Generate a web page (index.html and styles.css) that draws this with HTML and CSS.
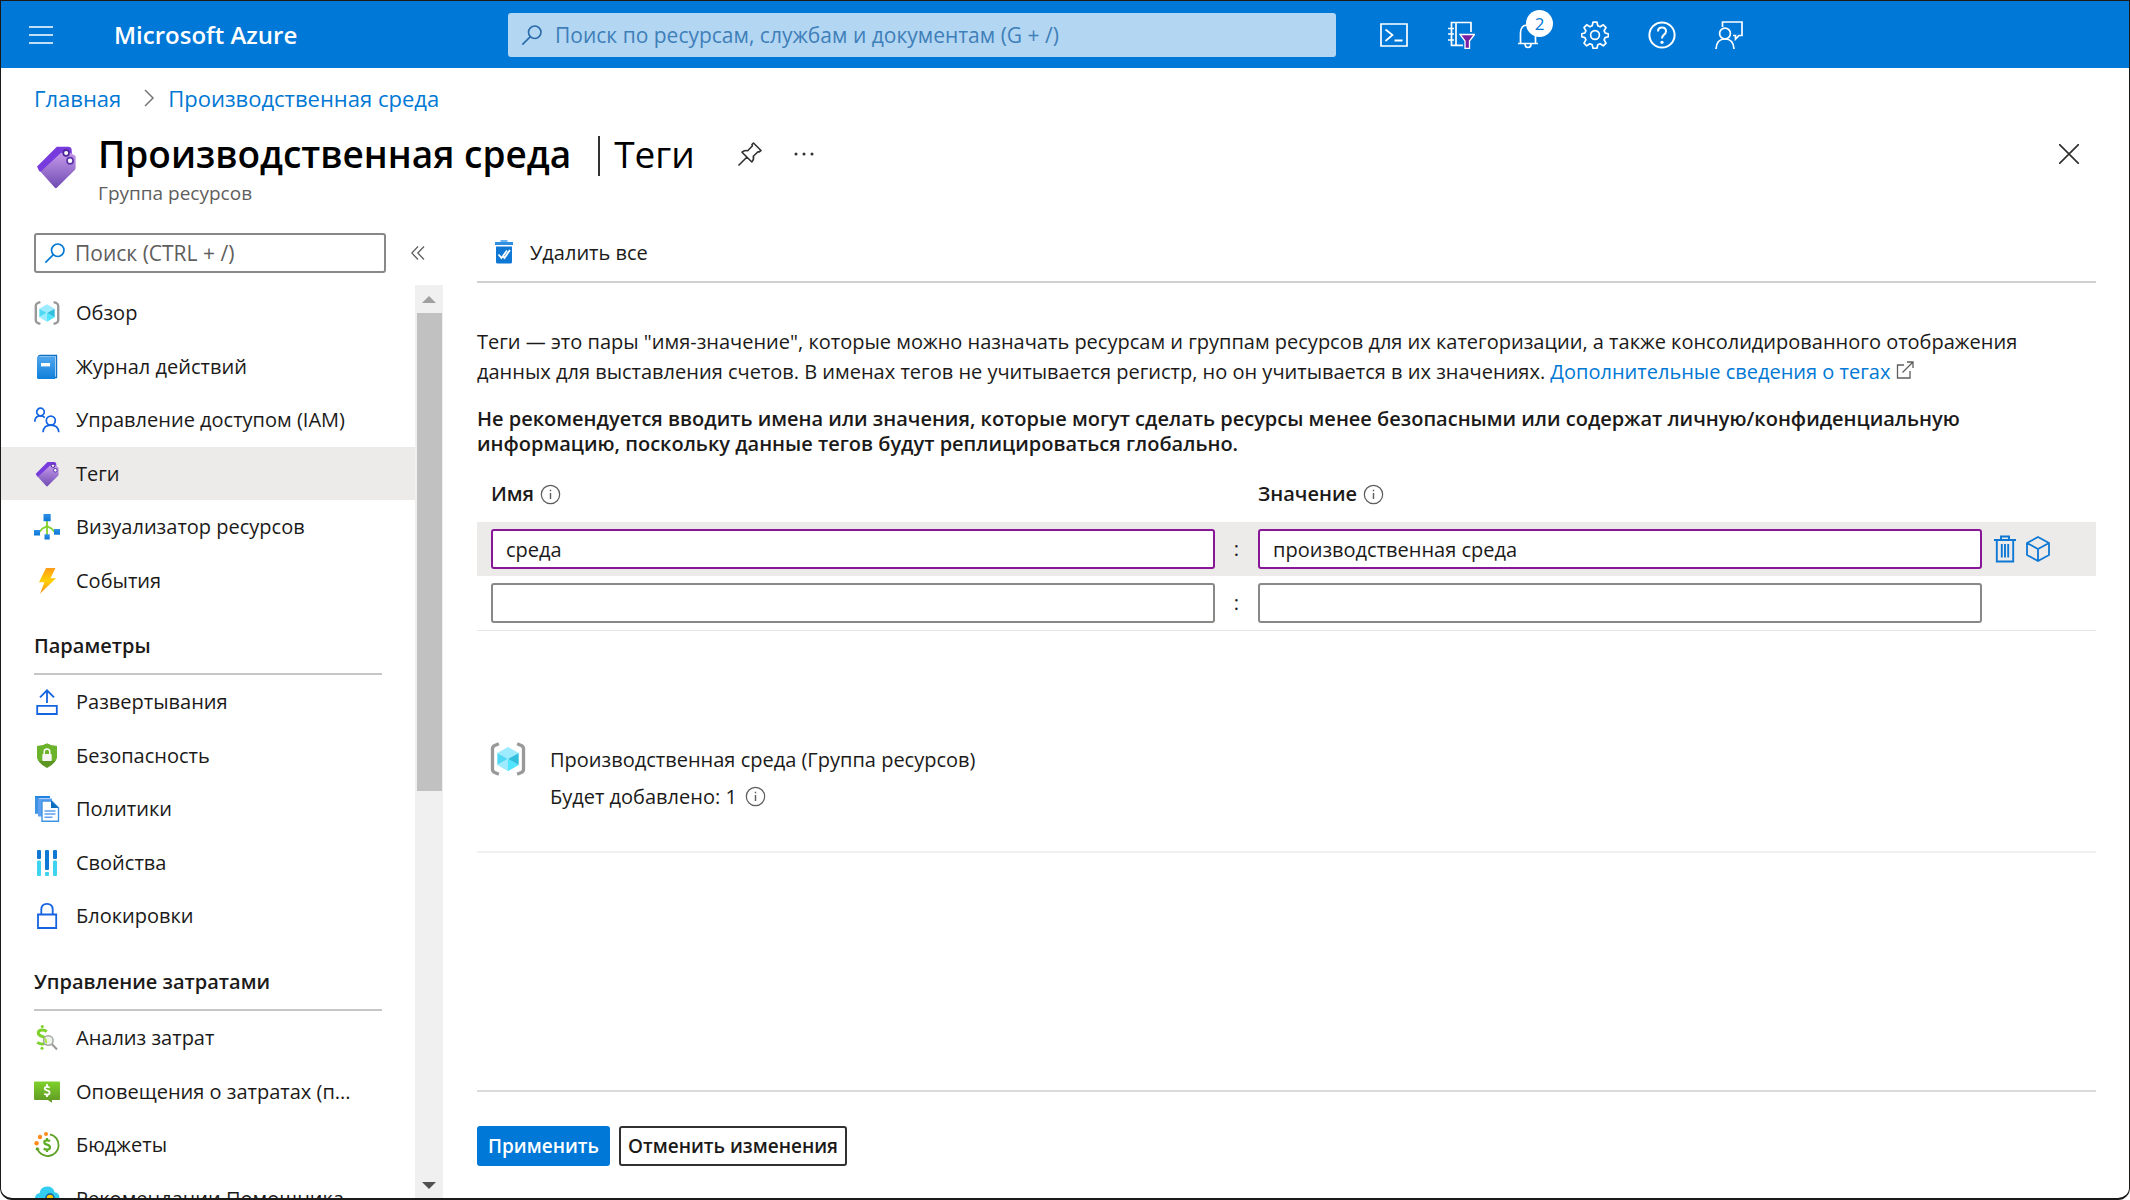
FILE: index.html
```html
<!DOCTYPE html>
<html lang="ru">
<head>
<meta charset="utf-8">
<title>Производственная среда | Теги - Microsoft Azure</title>
<link rel="stylesheet" href="styles.css">
</head>
<body>
<svg class="defs" aria-hidden="true">
  <defs>
    <linearGradient id="gTag" x1="0" y1="0" x2="0" y2="1"><stop offset="0" stop-color="#c69aeb"/><stop offset="1" stop-color="#6f4bb2"/></linearGradient>
    <linearGradient id="gBlue" x1="0" y1="0" x2="0" y2="1"><stop offset="0" stop-color="#2f8fe6"/><stop offset="1" stop-color="#0b78d4"/></linearGradient>
    <linearGradient id="gBook" x1="0" y1="0" x2="0" y2="1"><stop offset="0" stop-color="#4fa6ee"/><stop offset="1" stop-color="#0f7fd9"/></linearGradient>
    <linearGradient id="gBolt" x1="0" y1="0" x2="0" y2="1"><stop offset="0" stop-color="#ff9b1a"/><stop offset=".5" stop-color="#ffd000"/><stop offset="1" stop-color="#f78d1e"/></linearGradient>
    <linearGradient id="gGreen" x1="0" y1="0" x2="0" y2="1"><stop offset="0" stop-color="#7fd12b"/><stop offset="1" stop-color="#5e9624"/></linearGradient>
    <symbol id="i-search" viewBox="0 0 24 24"><g fill="none" stroke="currentColor" stroke-width="1.8"><circle cx="15" cy="9" r="6.8"/><path d="M10.2 13.8 1.5 22.5"/></g></symbol>
    <symbol id="i-info" viewBox="0 0 22 22"><circle cx="11" cy="11" r="9.6" fill="none" stroke="currentColor" stroke-width="1.3"/><path d="M11 9.4v6.4M11 6v1.7" stroke="currentColor" stroke-width="1.5"/></symbol>
    <symbol id="i-group" viewBox="0 0 26 26"><g fill="none" stroke="#999" stroke-width="2.4" stroke-linejoin="round"><path d="M6.4 2 3.4 3.2Q1.8 4 1.8 5.4V20.6Q1.8 22 3.4 22.8L6.4 24"/><path d="M19.6 2l3 1.2q1.6.8 1.6 2.200V20.600q0 1.400-1.600 2.200l-3 1.200"/></g><path d="M13 4.300 20.700 8.700 13 13 5.300 8.700z" fill="#9cebff"/><path d="M5.300 8.700 13 13 5.300 17.300z" fill="#50d9f5"/><path d="M5.300 17.300 13 13v8.800z" fill="#9cebff"/><path d="M13 13l7.700 4.300-7.700 4.500z" fill="#50e6ff"/><path d="M20.700 8.700v8.600L13 13z" fill="#32bedd"/></symbol>
    <symbol id="i-tag" viewBox="0 0 26 26"><path d="M13.500 1h6.800q1.700 0 1.900 1.700l.3 3.300L9 18.500 3 15.300 1.800 12.700z" fill="#773adc"/><path d="M4.500 15.200 15.800 4.800 21 4.300l3.600 2.200v7q0 .7-.5 1.300L13.500 25.300q-.7.600-1.300-.2L4.400 16.400q-.5-.6.100-1.200z" fill="url(#gTag)"/><circle cx="19" cy="4.700" r="1.700" fill="#fff" stroke="#4b2498"/><circle cx="21.300" cy="9.300" r="1.800" fill="#fff" stroke="#5b35a8"/></symbol>
    <symbol id="i-book" viewBox="0 0 26 26"><path d="M4 2.500Q4 .8 6 .8h17.200v23.400H4z" fill="#1271c4"/><path d="M5.300 2.200h16.500v20.500H5.300z" fill="#cfe6fa"/><path d="M3 2.800 21 2.600v22.400H4.200Q3 25 3 23.800z" fill="url(#gBook)"/><rect x="7" y="9" width="9" height="3.400" fill="#fff"/></symbol>
    <symbol id="i-people" viewBox="0 0 26 26"><g fill="none" stroke="#1463e0" stroke-width="1.700"><circle cx="6.500" cy="5" r="3.800"/><path d="M.8 14.800Q.8 8.900 6.500 8.900q2.600 0 4.300 1.700"/><circle cx="16.800" cy="13.600" r="4.500"/><path d="M9 25.300q.5-7.100 7.900-7.100 7.300 0 7.900 7.100"/></g></symbol>
    <symbol id="i-tree" viewBox="0 0 26 26"><path d="M13 6v15M13 11q0 1.500-4.500 3.500L4.500 19M13 11q0 1.500 4.500 3.500l4 4.500" fill="none" stroke="#7fd12b" stroke-width="1.800"/><g fill="url(#gBlue)"><rect x="9.500" y="0" width="7.200" height="7.200"/><rect x="0" y="16" width="6" height="5.500"/><rect x="20" y="15" width="6" height="5.700"/><rect x="10.500" y="20.300" width="5.200" height="5.200"/></g></symbol>
    <symbol id="i-bolt" viewBox="0 0 26 26"><path d="M12 0h9.500l-5 10.200H22L6 25.800l4.400-11.500H5z" fill="url(#gBolt)"/></symbol>
    <symbol id="i-deploy" viewBox="0 0 26 26"><g fill="none" stroke="#1463e0" stroke-width="1.800"><path d="M3.200 16.800h19.600v8.200H3.200zM13 14V1.500M6 8.300l7-7 7 7"/></g></symbol>
    <symbol id="i-shield" viewBox="0 0 26 26"><path d="M13 .5q4.500 2.600 10 2.600v9.400Q23 20 13 25 3 20 3 12.500V3.100Q8.500 3.100 13 .5z" fill="#5e9624"/><path d="M13 .5q4.500 2.600 10 2.600v9.400q0 3-1.500 5.200h-17Q3 15.500 3 12.500V3.100Q8.500 3.100 13 .5z" fill="#6bb32a"/><path d="M10.200 11.500V9q0-3 2.800-3t2.800 3v2.500" fill="none" stroke="#fff" stroke-width="1.500"/><rect x="8.300" y="11" width="9.400" height="7" rx=".8" fill="#f5f5f5"/></symbol>
    <symbol id="i-docs" viewBox="0 0 26 26"><path d="M1 0h15v2H4v15.500H1z" fill="#1f82dc"/><path d="M1 1.500h4v16H1z" fill="#3f93e3"/><path d="M4 2.500h14v4H8v14H4z" fill="#5ea0ef"/><path d="M8 5h9.500l7 6.700V25.300H8z" fill="#fff" stroke="#3f93e3" stroke-width="1.400"/><path d="M17 4.500l7.500 7.500H17z" fill="#0f6cbd"/><path d="M10.500 15h11M10.500 18h11M10.500 21.200h8" stroke="#5ea0ef" stroke-width="1.500"/></symbol>
    <symbol id="i-props" viewBox="0 0 26 26"><g fill="#0f78d4"><rect x="3" y="0" width="4" height="9" rx="1"/><rect x="11" y="0" width="4" height="20" rx="1"/><rect x="19" y="0" width="4" height="9" rx="1"/></g><g fill="#3ed3ee"><rect x="3" y="10.500" width="4" height="15.500" rx="1"/><rect x="11" y="22" width="4" height="4" rx="1"/><rect x="19" y="10.500" width="4" height="15.500" rx="1"/></g></symbol>
    <symbol id="i-lock" viewBox="0 0 26 26"><g fill="none" stroke="#1463e0" stroke-width="1.800"><path d="M4 11.500h18.200V25H4zM7.300 11.500V6.500q0-5.600 5.700-5.600t5.700 5.600v5"/></g></symbol>
    <symbol id="i-cost" viewBox="0 0 26 26"><path d="M12.700 6.600Q11 5 8.200 5 4.300 5 4.300 8q0 2.200 3.500 3.300 4.200 1.200 4.200 4.100 0 3.600-4.300 3.600-2.700 0-4.400-1.700" fill="none" stroke="#7fd12b" stroke-width="3"/><circle cx="8.300" cy="1.600" r="1.500" fill="#7fd12b"/><circle cx="8" cy="23.300" r="1.500" fill="#7fd12b"/><circle cx="14.300" cy="15.500" r="4.800" fill="#eef5e8" stroke="#a8a8a8" stroke-width="1.500"/><path d="M10.500 12.500q3 1 2.500 6.500-3.500-2-2.500-6.500z" fill="#a6e64b"/><path d="M18 19.300l5 5.200" stroke="#999" stroke-width="2"/></symbol>
    <symbol id="i-alert" viewBox="0 0 26 26"><path d="M1 2.500h24q1 0 1 1V20q0 1-1 1h-7v2.700L13.800 21H1q-1 0-1-1V3.500q0-1 1-1z" fill="url(#gGreen)"/><path d="M15.700 8.600q-1-.8-2.700-.8-2.300 0-2.300 1.700 0 1.300 2.300 1.900 2.600.6 2.600 2.300 0 1.900-2.600 1.900-1.700 0-2.700-1M13 5v2.500M13 15.500V18" fill="none" stroke="#fff" stroke-width="1.800"/></symbol>
    <symbol id="i-budget" viewBox="0 0 26 26"><path d="M16 2.300a11 11 0 1 1-13 13.500l-.5 2.500m.5-2.500 2 2" fill="none" stroke="#5e9f24" stroke-width="1.800"/><circle cx="12" cy="2" r="2" fill="#ff8c1a"/><circle cx="6" cy="5" r="2.200" fill="#ff8c1a"/><circle cx="2.600" cy="11.300" r="2.200" fill="#ff8c1a"/><path d="M16 9.300q-1-.9-3-.9-2.700 0-2.700 2 0 1.500 2.700 2.200 3 .8 3 2.700 0 2.300-3 2.300-2 0-3.200-1.200M13 6v2.500M13 17.500V20" fill="none" stroke="#5eab24" stroke-width="2.200"/></symbol>
    <symbol id="i-advisor" viewBox="0 0 26 26"><path d="M6 17q-5 0-5-4.600Q1 8 5.500 7.300 6.500.5 13 .5t7.500 5.800Q25.500 7 25.500 12q0 5-5.500 5z" fill="#32cdf0"/><circle cx="16" cy="12" r="4" fill="#ffca00" stroke="#0f5ea8" stroke-width="1.500"/></symbol>
  </defs>
</svg>

<div class="window">
  <header class="topbar">
    <button class="icon-btn menu-btn" aria-label="Меню"><svg width="24" height="18" viewBox="0 0 24 18"><path d="M0 1h24M0 9h24M0 17h24" stroke="#fff" stroke-width="1.600"/></svg></button>
    <a class="brand" href="#">Microsoft Azure</a>
    <label class="global-search"><svg class="ico-search"><use href="#i-search"/></svg><input type="text" aria-label="Поиск" placeholder="Поиск по ресурсам, службам и документам (G + /)"></label>
    <nav class="top-icons">
      <button class="icon-btn" aria-label="Cloud Shell"><svg viewBox="0 0 28 28"><g fill="none" stroke="#fff" stroke-width="1.700"><path d="M1 3h26v22H1z"/><path d="M5.500 8.500l7 5.500-7 6"/><path d="M14.500 19.500h8" stroke-width="2"/></g></svg></button>
      <button class="icon-btn" aria-label="Каталоги и подписки"><svg viewBox="0 0 28 28"><g fill="none" stroke="#fff" stroke-width="1.700"><path d="M24 11V1.500H4.500v22.800H16M9 1.500v22.800M1 7.500h6M1 13h6M1 19h6"/></g><path d="M13 13.500h14.500l-5 6.500v7.500h-4.500V20z" fill="#7a1fa2" stroke="#fff" stroke-width="1.300"/></svg></button>
      <button class="icon-btn" aria-label="Уведомления"><svg viewBox="0 0 28 28"><g fill="none" stroke="#fff" stroke-width="1.700"><path d="M4 22.500h20M6.500 22.500V12q0-8 7.500-8 7.500 0 7.500 8v10.500M11 23q0 3.500 3 3.500t3-3.500"/></g></svg><span class="badge">2</span></button>
      <button class="icon-btn" aria-label="Параметры"><svg viewBox="0 0 28 28"><g fill="none" stroke="#fff" stroke-width="1.700" stroke-linejoin="round"><circle cx="14" cy="14" r="4.400"/><path d="M12 1.200h4l.8 3.600 2.300 1 3.200-2 2.700 2.800-1.900 3.100 1 2.300 3.300.8v2.900l-3.300.9-1 2.300 1.900 3.200-2.700 2.700-3.200-2-2.300 1-.8 3.500h-4l-.8-3.500-2.300-1-3.200 2L3 22.100l1.900-3.200-1-2.300-3.200-.9v-2.900l3.200-.8 1-2.300L3 6.600l2.700-2.800 3.200 2 2.300-1z"/></g></svg></button>
      <button class="icon-btn" aria-label="Справка"><svg viewBox="0 0 28 28"><g fill="none" stroke="#fff" stroke-width="2"><circle cx="14" cy="14" r="12.600"/><path d="M10 10.500q0-4 4-4t4 3.800q0 2-2.200 3.600-1.800 1.400-1.800 3.700"/></g><circle cx="14" cy="21.300" r="1.600" fill="#fff"/></svg></button>
      <button class="icon-btn" aria-label="Отзывы"><svg viewBox="0 0 28 28"><g fill="none" stroke="#fff" stroke-width="1.700"><circle cx="10" cy="12.500" r="5.400"/><path d="M1 28q.5-10 9-10t9 10M7.500 6V1H27v13.500h-3l-3.500 3.700v-3.700H18"/></g></svg></button>
    </nav>
  </header>

  <nav class="breadcrumb" aria-label="Навигация">
    <a href="#">Главная</a>
    <svg width="12" height="18" viewBox="0 0 12 18"><path d="M2 1l8 8-8 8" fill="none" stroke="#767676" stroke-width="1.500"/></svg>
    <a href="#">Производственная среда</a>
  </nav>

  <div class="title-row">
    <svg class="title-icon"><use href="#i-tag"/></svg>
    <div class="title-text">
      <h1><span class="name">Производственная среда</span><span class="bar"></span><span class="page">Теги</span></h1>
      <p>Группа ресурсов</p>
    </div>
    <button class="icon-btn pin" aria-label="Закрепить"><svg width="26" height="26" viewBox="0 0 26 26"><path d="M16.500 2l7.500 7.500-2 1.500-1-.3-4.700 4.600q1 3.400-1.500 5.700L5 11.200q2.500-2.400 5.700-1.500L15.300 5 15 3.500zM9.800 16.200 1.500 24.500" fill="none" stroke="#323130" stroke-width="1.600" stroke-linejoin="round"/></svg></button>
    <button class="icon-btn more" aria-label="Еще"><svg width="20" height="4" viewBox="0 0 20 4"><g fill="#323130"><circle cx="2" cy="2" r="1.500"/><circle cx="10" cy="2" r="1.500"/><circle cx="18" cy="2" r="1.500"/></g></svg></button>
    <button class="icon-btn close" aria-label="Закрыть"><svg width="20" height="20" viewBox="0 0 20 20"><path d="M0 0l20 20M20 0 0 20" stroke="#323130" stroke-width="1.700"/></svg></button>
  </div>

  <div class="body">
    <aside class="sidebar">
      <div class="side-search">
        <label><svg class="ico-search"><use href="#i-search"/></svg><input type="text" aria-label="Поиск по меню" placeholder="Поиск (CTRL + /)"></label>
        <button class="icon-btn" aria-label="Свернуть"><svg width="14" height="14" viewBox="0 0 14 14"><path d="M7 .5.800 7 7 13.500M13 .5 6.800 7l6.200 6.500" fill="none" stroke="#605e5c" stroke-width="1.300"/></svg></button>
      </div>
      <div class="side-scroll">
        <nav class="menu">
          <ul>
            <li><a href="#"><svg><use href="#i-group"/></svg><span>Обзор</span></a></li>
            <li><a href="#"><svg><use href="#i-book"/></svg><span>Журнал действий</span></a></li>
            <li><a href="#"><svg><use href="#i-people"/></svg><span>Управление доступом (IAM)</span></a></li>
            <li><a href="#" class="selected" aria-current="page"><svg><use href="#i-tag"/></svg><span>Теги</span></a></li>
            <li><a href="#"><svg><use href="#i-tree"/></svg><span>Визуализатор ресурсов</span></a></li>
            <li><a href="#"><svg><use href="#i-bolt"/></svg><span>События</span></a></li>
          </ul>
          <h2>Параметры</h2>
          <ul>
            <li><a href="#"><svg><use href="#i-deploy"/></svg><span>Развертывания</span></a></li>
            <li><a href="#"><svg><use href="#i-shield"/></svg><span>Безопасность</span></a></li>
            <li><a href="#"><svg><use href="#i-docs"/></svg><span>Политики</span></a></li>
            <li><a href="#"><svg><use href="#i-props"/></svg><span>Свойства</span></a></li>
            <li><a href="#"><svg><use href="#i-lock"/></svg><span>Блокировки</span></a></li>
          </ul>
          <h2>Управление затратами</h2>
          <ul>
            <li><a href="#"><svg><use href="#i-cost"/></svg><span>Анализ затрат</span></a></li>
            <li><a href="#"><svg><use href="#i-alert"/></svg><span>Оповещения о затратах (п...</span></a></li>
            <li><a href="#"><svg><use href="#i-budget"/></svg><span>Бюджеты</span></a></li>
            <li><a href="#"><svg><use href="#i-advisor"/></svg><span>Рекомендации Помощника</span></a></li>
          </ul>
        </nav>
        <div class="scrollbar" aria-hidden="true"><i class="up"></i><i class="thumb"></i><i class="down"></i></div>
      </div>
    </aside>

    <main class="content">
      <div class="toolbar">
        <button class="cmd"><svg width="20" height="24" viewBox="0 0 20 24"><path d="M6.500 0h7v2h-7z" fill="#6db3ee"/><path d="M1 2h18v3H1z" fill="#2f8fe0"/><path d="M2 6.500h16V22q0 1.500-1.500 1.500h-13Q2 23.500 2 22z" fill="#0f78d4"/><path d="M4.500 14.500l3 3.500 5.500-7.500M8.500 15.500l2 2.500L16 10" fill="none" stroke="#fff" stroke-width="1.800"/></svg>Удалить все</button>
      </div>
      <p class="intro">Теги — это пары "имя-значение", которые можно назначать ресурсам и группам ресурсов для их категоризации, а также консолидированного отображения данных для выставления счетов. В именах тегов не учитывается регистр, но он учитывается в их значениях. <a href="#">Дополнительные сведения о тегах</a> <svg width="18" height="18" viewBox="0 0 18 18"><path d="M8 4H1.500v13H14V10M6.500 11.500 17 1M11 1h6v6" fill="none" stroke="#605e5c" stroke-width="1.300"/></svg></p>
      <p class="warning">Не рекомендуется вводить имена или значения, которые могут сделать ресурсы менее безопасными или содержат личную/конфиденциальную информацию, поскольку данные тегов будут реплицироваться глобально.</p>
      <table class="tags">
        <thead>
          <tr><th>Имя <svg class="ico-info"><use href="#i-info"/></svg></th><td></td><th>Значение <svg class="ico-info"><use href="#i-info"/></svg></th><td></td></tr>
        </thead>
        <tbody>
          <tr class="active"><td><input type="text" aria-label="Имя" value="среда"></td><td class="colon">:</td><td><input type="text" aria-label="Значение" value="производственная среда"></td>
            <td class="actions">
              <button class="icon-btn" aria-label="Удалить"><svg width="22" height="28" viewBox="0 0 22 28"><g fill="none" stroke="#0f78d4" stroke-width="1.900"><path d="M0 5h22M7 5V1.500h8V5M2.800 5v21.500h16.400V5M7.800 9v13.500M11 9v13.500M14.200 9v13.500"/></g></svg></button>
              <button class="icon-btn" aria-label="Ресурс"><svg width="24" height="26" viewBox="0 0 24 26"><g fill="none" stroke="#0f78d4" stroke-width="1.800" stroke-linejoin="round"><path d="M12 1l11 6v12l-11 6L1 19V7zM1 7l11 6 11-6M12 13v12"/></g></svg></button>
            </td></tr>
          <tr><td><input type="text" aria-label="Имя"></td><td class="colon">:</td><td><input type="text" aria-label="Значение"></td><td></td></tr>
        </tbody>
      </table>
      <section class="summary">
        <svg class="group-icon"><use href="#i-group"/></svg>
        <div>
          <p>Производственная среда (Группа ресурсов)</p>
          <p>Будет добавлено: 1 <svg class="ico-info"><use href="#i-info"/></svg></p>
        </div>
      </section>
      <footer class="actions-bar">
        <button class="btn primary">Применить</button>
        <button class="btn">Отменить изменения</button>
      </footer>
    </main>
  </div>
</div>
</body>
</html>
```
FILE: styles.css
```css
* { box-sizing: border-box; }
body {
  margin: 0;
  background: #fff;
  color: #1b1a19;
  font: 20px/28px "Open Sans", "Noto Sans", sans-serif;
}
h1, h2, p, ul { margin: 0; padding: 0; font-size: inherit; font-weight: inherit; }
ul { list-style: none; }
a { color: #0078d4; text-decoration: none; }
button, input { font: inherit; color: inherit; }
input { min-width: 0; }
svg { display: block; flex: none; }
.defs { position: absolute; width: 0; height: 0; }
.icon-btn { display: grid; place-items: center; padding: 0; border: 0; background: none; }

.window {
  display: flex;
  flex-direction: column;
  height: 100vh;
  overflow: hidden;
  border: 1px solid #1b1a19;
  border-bottom-width: 2px;
  border-radius: 0 0 12px 12px;
}

/* Top bar */
.topbar { display: flex; align-items: center; flex: none; height: 67px; padding-left: 28px; background: #0078d7; }
.menu-btn { width: 24px; }
.brand { width: 455px; padding-left: 61px; color: #fff; font-size: 24px; font-weight: 600; white-space: nowrap; }
.global-search { display: flex; align-items: center; gap: 12px; width: 828px; height: 44px; padding: 0 13px; border-radius: 3px; background: #b3d6f2; color: #2b6cab; font-size: 21px; }
.global-search input { flex: 1; padding: 0; border: 0; outline: 0; background: none; }
.global-search input::placeholder { color: #3f7fb9; opacity: 1; }
.ico-search { width: 22px; height: 22px; }
.top-icons { display: flex; gap: 39px; margin-left: 44px; }
.top-icons .icon-btn { position: relative; width: 28px; height: 28px; }
.top-icons svg { width: 28px; height: 28px; }
.badge { position: absolute; left: 12px; top: -11px; width: 27px; height: 27px; border-radius: 50%; background: #fff; color: #0078d4; font-size: 17px; line-height: 27px; }

/* Title */
.breadcrumb { display: flex; align-items: center; gap: 13px; padding: 16px 33px 0; font-size: 22px; }
.breadcrumb svg { margin-left: 9px; }
.title-row { display: flex; align-items: flex-start; height: 98px; padding: 14px 30px 0 33px; }
.title-icon { width: 44px; height: 48px; margin-top: 17px; }
.title-text { margin: 3px 0 0 20px; }
.title-text h1 { display: flex; align-items: center; height: 50px; font-size: 37px; white-space: nowrap; color: #000; }
.title-text .name { font-weight: 600; }
.title-text .bar { width: 2px; height: 40px; margin: 4px 14px 0 27px; background: #323130; }
.title-text p { color: #605e5c; font-size: 19px; }
.pin { margin: 15px 0 0 42px; }
.more { height: 26px; margin: 15px 0 0 31px; }
.close { margin: 18px 20px 0 auto; }

/* Body columns */
.body { display: flex; flex: 1; min-height: 0; }
.sidebar { display: flex; flex-direction: column; width: 442px; flex: none; }
.side-search { display: flex; gap: 25px; padding: 23px 0 12px 33px; }
.side-search label { display: flex; align-items: center; gap: 9px; width: 352px; height: 40px; padding: 0 8px; border: 2px solid #8a8886; border-radius: 3px; color: #0078d4; font-size: 21px; }
.side-search input { flex: 1; padding: 0; border: 0; outline: 0; }
.side-search input::placeholder { color: #605e5c; opacity: 1; }
.side-scroll { display: flex; flex: 1; min-height: 0; }
.menu { flex: 1; overflow: hidden; padding-top: 1px; }
.menu ul { display: flex; flex-direction: column; }
.menu a { display: flex; align-items: center; gap: 16px; height: 54px; padding-left: 33px; color: #1b1a19; white-space: nowrap; }
.menu li:nth-child(even) a { height: 53px; }
.menu a.selected { background: #edebe9; }
.menu svg { width: 26px; height: 26px; }
.menu h2 { height: 68px; margin: 0 33px; padding-top: 25px; border-bottom: 2px solid #c8c6c4; font-weight: 600; }
.scrollbar { display: flex; flex-direction: column; align-items: center; width: 28px; padding: 11px 0 9px; background: #f0f0f0; }
.scrollbar .up { border: 7px solid transparent; border-top: 0; border-bottom-color: #a0a0a0; }
.scrollbar .thumb { width: 25px; height: 478px; margin-top: 10px; background: #c1c1c1; }
.scrollbar .down { margin-top: auto; border: 7px solid transparent; border-bottom: 0; border-top-color: #505050; }

/* Tag editor */
.content { display: flex; flex-direction: column; flex: 1; min-width: 0; padding: 23px 33px 32px 34px; }
.toolbar { height: 50px; padding-left: 17px; border-bottom: 2px solid #d2d0ce; }
.cmd { display: flex; align-items: center; gap: 16px; height: 40px; padding: 0; border: 0; background: none; }
.cmd svg { margin-bottom: 2px; }
.intro { margin-top: 44px; padding-right: 30px; line-height: 30px; }
.intro svg { display: inline; }
.warning { margin-top: 19px; padding-right: 30px; line-height: 25px; font-weight: 600; }
.tags { display: block; margin-top: 24px; }
.tags thead, .tags tbody { display: block; }
.tags tr { display: grid; grid-template-columns: 1fr 43px 1fr 114px; align-items: center; padding-left: 14px; }
.tags th, .tags td { padding: 0; }
.tags thead tr { height: 42px; align-items: start; }
.tags th { display: flex; align-items: center; gap: 6px; font-weight: 600; }
.tags tbody tr { height: 54px; }
.tags tbody tr:last-child { height: 55px; border-bottom: 1px solid #e9e7e5; }
.tags tr.active { background: #edebe9; }
.tags input { display: block; width: 100%; height: 40px; padding: 0 13px; border: 2px solid #8a8886; border-radius: 3px; outline: 0; background: #fff; }
.tags .active input { border-color: #881798; }
.tags .colon { text-align: center; }
.tags .actions { display: flex; align-items: center; gap: 10px; padding-left: 12px; }
.ico-info { width: 21px; height: 21px; color: #605e5c; }

.summary { display: flex; gap: 24px; padding: 110px 0 36px 13px; border-bottom: 2px solid #f0f0f0; line-height: 37px; }
.group-icon { width: 36px; height: 36px; }
.summary p { display: flex; align-items: center; gap: 8px; }
.actions-bar { display: flex; gap: 9px; margin-top: auto; padding-top: 34px; border-top: 2px solid #dddbda; }
.btn { height: 40px; padding: 0 7px; border: 2px solid #323130; border-radius: 3px; background: #fff; font-size: 19px; font-weight: 600; white-space: nowrap; }
.primary { padding: 0 9px; border-color: #0078d7; background: #0078d7; color: #fff; }
```
